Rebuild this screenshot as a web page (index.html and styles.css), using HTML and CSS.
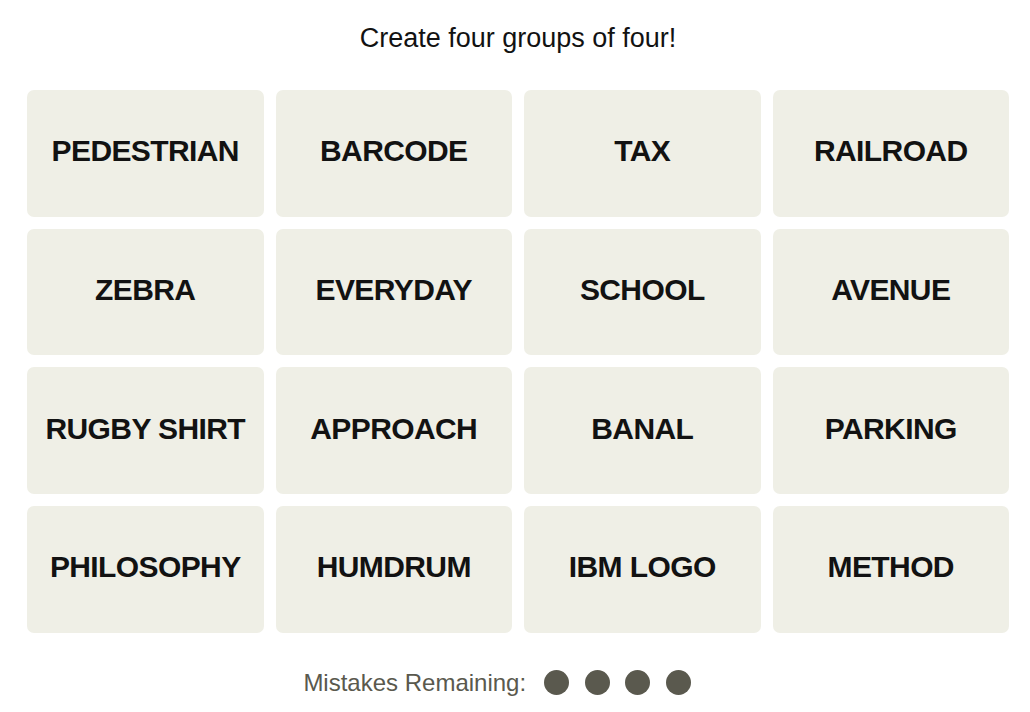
FILE: index.html
```html
<!DOCTYPE html>
<html>
<head>
<meta charset="utf-8">
<link rel="stylesheet" href="styles.css">
</head>
<body>
<main class="game">
  <h1 class="prompt">Create four groups of four!</h1>
  <section class="board">
    <div class="tile">PEDESTRIAN</div>
    <div class="tile">BARCODE</div>
    <div class="tile">TAX</div>
    <div class="tile">RAILROAD</div>
    <div class="tile">ZEBRA</div>
    <div class="tile">EVERYDAY</div>
    <div class="tile">SCHOOL</div>
    <div class="tile">AVENUE</div>
    <div class="tile">RUGBY SHIRT</div>
    <div class="tile">APPROACH</div>
    <div class="tile">BANAL</div>
    <div class="tile">PARKING</div>
    <div class="tile">PHILOSOPHY</div>
    <div class="tile">HUMDRUM</div>
    <div class="tile">IBM LOGO</div>
    <div class="tile">METHOD</div>
  </section>
  <div class="mistakes">
    <span class="mistakes-label">Mistakes Remaining:</span>
    <span class="dots">
      <span class="dot"></span><span class="dot"></span><span class="dot"></span><span class="dot"></span>
    </span>
  </div>
</main>
</body>
</html>
```
FILE: styles.css
```css
html, body {
  margin: 0;
  padding: 0;
  background: #ffffff;
}
body {
  font-family: "Liberation Sans", Arial, sans-serif;
  color: #121212;
}
.game {
  width: 982px;
  margin-left: 27px;
}
.prompt {
  margin: 0;
  padding-top: 22px;
  height: 90px;
  box-sizing: border-box;
  font-size: 27px;
  font-weight: normal;
  line-height: 32px;
  text-align: center;
}
.board {
  display: grid;
  grid-template-columns: repeat(4, 1fr);
  grid-auto-rows: 126.67px;
  gap: 12px;
}
.tile {
  background: #efefe6;
  border-radius: 7px;
  display: flex;
  align-items: center;
  justify-content: center;
  padding-bottom: 4px;
  box-sizing: border-box;
  font-size: 30px;
  letter-spacing: -0.6px;
  font-weight: bold;
  color: #121212;
}
.mistakes {
  display: flex;
  justify-content: center;
  align-items: center;
  margin-top: 37px;
  padding-right: 42px;
  height: 26px;
  color: #5a594e;
  font-size: 24px;
}
.mistakes-label {
  margin-right: 18px;
}
.dots {
  display: flex;
  gap: 15.5px;
}
.dot {
  width: 25px;
  height: 25px;
  border-radius: 50%;
  background: #5a594e;
}
```
